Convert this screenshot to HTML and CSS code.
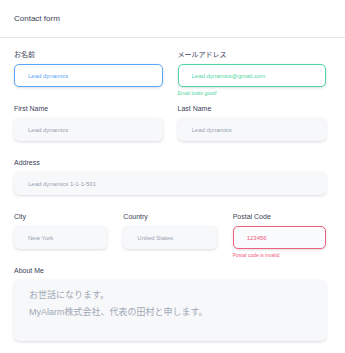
FILE: index.html
```html
<!DOCTYPE html>
<html lang="ja">
<head>
<meta charset="utf-8">
<title>Contact form</title>
<link rel="stylesheet" href="styles.css">
</head>
<body>
<div class="card">
  <div class="card-header">Contact form</div>
  <form class="form">
    <div class="row two">
      <div class="group">
        <label class="label">お名前</label>
        <input class="control focus" type="text" value="Lead dynamics">
      </div>
      <div class="group">
        <label class="label">メールアドレス</label>
        <input class="control valid" type="text" value="Lead dynamics@gmail.com">
        <div class="hint ok">Email looks good!</div>
      </div>
    </div>
    <div class="row two">
      <div class="group">
        <label class="label">First Name</label>
        <input class="control" type="text" placeholder="Lead dynamics">
      </div>
      <div class="group">
        <label class="label">Last Name</label>
        <input class="control" type="text" placeholder="Lead dynamics">
      </div>
    </div>
    <div class="row one">
      <div class="group">
        <label class="label">Address</label>
        <input class="control" type="text" placeholder="Lead dynamics 1-1-1-501">
      </div>
    </div>
    <div class="row three">
      <div class="group">
        <label class="label">City</label>
        <input class="control" type="text" placeholder="New York">
      </div>
      <div class="group">
        <label class="label">Country</label>
        <input class="control" type="text" placeholder="United States">
      </div>
      <div class="group">
        <label class="label">Postal Code</label>
        <input class="control invalid" type="text" value="123456">
        <div class="hint bad">Postal code is invalid.</div>
      </div>
    </div>
    <div class="row one">
      <div class="group">
        <label class="label">About Me</label>
        <textarea class="control area" placeholder="お世話になります。&#10;MyAlarm株式会社、代表の田村と申します。"></textarea>
      </div>
    </div>
  </form>
</div>
</body>
</html>
```
FILE: styles.css
```css
* { box-sizing: border-box; }
html, body {
  margin: 0;
  padding: 0;
  background: #ffffff;
}
body {
  font-family: "Liberation Sans", "Noto Sans CJK JP", sans-serif;
  color: #32325d;
}
.card-header {
  height: 38px;
  padding: 0 14px;
  display: flex;
  align-items: center;
  font-size: 8px;
  color: #3a4156;
  border-bottom: 1px solid #e3e5ea;
}
.form {
  padding: 12px 19px 0 14px;
}
.row {
  display: grid;
  margin-bottom: 17px;
}
.row.two { grid-template-columns: 1fr 1fr; column-gap: 15px; }
.row.three { grid-template-columns: 1fr 1fr 1fr; column-gap: 16px; }
.row.one { grid-template-columns: 1fr; }
.group {
  display: flex;
  flex-direction: column;
  min-width: 0;
}
.label {
  display: block;
  font-size: 7px;
  line-height: 10px;
  height: 10px;
  margin-bottom: 4px;
  color: #3c4257;
}
.control {
  display: block;
  width: 100%;
  height: 23px;
  padding: 0 13px;
  border: 1px solid transparent;
  border-radius: 5px;
  background: #f7f8fa;
  font-family: "Liberation Sans", "Noto Sans CJK JP", sans-serif;
  font-size: 6px;
  color: #8898aa;
  box-shadow: 0 1px 3px rgba(50, 50, 93, 0.15), 0 1px 0 rgba(0, 0, 0, 0.02);
  outline: none;
}
.control::placeholder { color: #98a2b1; opacity: 1; }
.control.focus {
  background: #ffffff;
  border-color: #5aa6f8;
  color: #5aa6f8;
}
.control.valid {
  background: #ffffff;
  border-color: #4ed6a0;
  color: #4ed6a0;
}
.control.invalid {
  background: #fafbfd;
  border-color: #f0607a;
  color: #f0607a;
}
.hint {
  font-family: "Liberation Sans", sans-serif;
  font-size: 5px;
  line-height: 7px;
  margin-top: 3px;
  margin-bottom: -10px;
}
.hint.ok { color: #4ed6a0; }
.hint.bad { color: #f0607a; }
.control.area {
  height: 61px;
  padding: 6px 14px;
  resize: none;
  font-family: "Liberation Sans", "Noto Sans CJK JP", sans-serif;
  font-size: 9px;
  line-height: 17px;
  overflow: hidden;
}
.control.area::placeholder { color: #a0a8b5; }
```
